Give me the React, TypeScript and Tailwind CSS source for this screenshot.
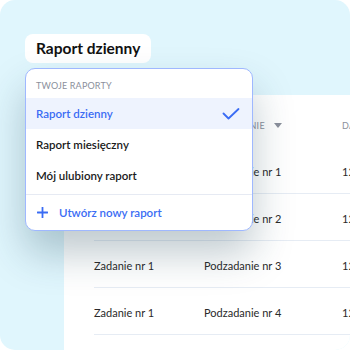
import React from 'react';

const rows = [
    { task: 'Zadanie nr 1', sub: 'Podzadanie nr 1', date: '12.05.2023' },
    { task: 'Zadanie nr 1', sub: 'Podzadanie nr 2', date: '12.05.2023' },
    { task: 'Zadanie nr 1', sub: 'Podzadanie nr 3', date: '12.05.2023' },
    { task: 'Zadanie nr 1', sub: 'Podzadanie nr 4', date: '12.05.2023' },
];

const reports = ['Raport dzienny', 'Raport miesięczny', 'Mój ulubiony raport'];

const ReportMenu: React.FC = () => (
    <div className="absolute left-[25px] top-[68px] w-[228px] rounded-[10px] border border-[#9fb8ff] bg-white shadow-[0_22px_40px_rgba(20,60,80,0.28)] overflow-hidden">
        <div className="h-[29px] pl-[10px] pt-[12px] text-[9px] tracking-[0.02em] text-[#8b909c] uppercase leading-none">
            Twoje raporty
        </div>
        {reports.map((name, i) => (
            <div
                key={name}
                className={`h-[31px] flex items-center justify-between pl-[10px] pr-[12px] text-[11.5px] font-semibold ${
                    i === 0 ? 'bg-[#eef3fe] text-[#3a6cf4]' : 'text-[#1a1a1a]'
                }`}
            >
                <span>{name}</span>
                {i === 0 && (
                    <svg width="18" height="12" viewBox="0 0 18 12" fill="none">
                        <path d="M1.5 5.5 L6.5 10.5 L16.5 1" stroke="#3a6cf4" strokeWidth="1.8" strokeLinecap="round" strokeLinejoin="round" />
                    </svg>
                )}
            </div>
        ))}
        <div className="mt-[3px] border-t border-[#e6eaf3] h-[36px] flex items-center pl-[11px] gap-[11px] text-[11.5px] font-semibold text-[#3a6cf4]">
            <svg width="11" height="11" viewBox="0 0 11 11" fill="none">
                <path d="M5.5 0.5 V10.5 M0.5 5.5 H10.5" stroke="#3a6cf4" strokeWidth="1.8" strokeLinecap="round" />
            </svg>
            <span>Utwórz nowy raport</span>
        </div>
    </div>
);

export default function App() {
    return (
        <div className="w-[350px] h-[350px] bg-white overflow-hidden" style={{ fontFamily: 'Lato, "Noto Sans", sans-serif' }}>
            <div className="relative w-full h-full rounded-[15px] bg-[#e0f6fd] overflow-hidden flex flex-col">
                <div className="pt-[34px] pl-[25px]">
                    <div className="inline-flex items-center h-[29px] px-[11px] rounded-[8px] bg-white text-[15.5px] font-bold text-[#111]">
                        Raport dzienny
                    </div>
                </div>
                <div className="mt-[32px] ml-[64px] flex-1 bg-white pl-[30px]">
                    <div className="h-[52px] pt-[9px] flex items-center text-[9px] tracking-[0.03em] text-[#8b909c] uppercase whitespace-nowrap">
                        <div className="w-[110px] shrink-0">Zadanie</div>
                        <div className="w-[138px] shrink-0 flex items-center gap-[9px]">
                            <span>Podzadanie</span>
                            <svg width="8" height="5" viewBox="0 0 8 5"><path d="M0 0 H8 L4 5 Z" fill="#8b909c" /></svg>
                        </div>
                        <div className="shrink-0">Data</div>
                    </div>
                    {rows.map((r) => (
                        <div key={r.sub} className="h-[47px] pt-[4px] border-b border-[#e6ecf4] flex items-center text-[11px] text-[#2a2a2a] whitespace-nowrap">
                            <div className="w-[110px] shrink-0">{r.task}</div>
                            <div className="w-[138px] shrink-0">{r.sub}</div>
                            <div>{r.date}</div>
                        </div>
                    ))}
                </div>
                <ReportMenu />
            </div>
        </div>
    );
}
